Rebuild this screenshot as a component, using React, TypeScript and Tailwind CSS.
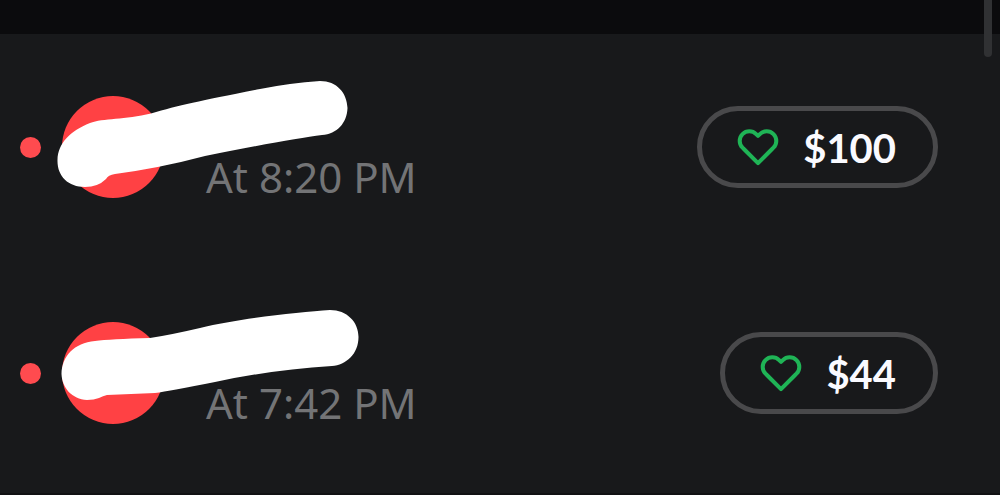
type Activity = {
  time: string;
  amount: string;
  mark: string;
};

const activities: Activity[] = [
  {
    time: "At 8:20 PM",
    amount: "$100",
    mark: "M57.5 126C58 109 70 97 90 89C103 84 125 86 151 79.5C180 71 200 67 260 55Q290 49 320 47C337 47 347 59 347.5 74C347 89 337 100 322 101Q290 105 205 122Q160 134 115 140Q108 141 106 145Q98 153 85 153C68 153 57 142 57.5 126Z",
  },
  {
    time: "At 7:42 PM",
    amount: "$44",
    mark: "M61.5 114C62 96 74 83 95 81Q110 79 150 78Q170 75 200 68C240 58 300 52 330 50C347 50 358.5 62 358.5 77C358.5 94 346 105 332 106Q270 110 215 122Q170 131 155 133L107 135Q103 136 99 138Q94 140 87 140C72 139 62 128 61.5 114Z",
  },
];

function Heart() {
  return (
    <svg className="size-[42px]" viewBox="0 0 24 24" fill="none" aria-hidden="true">
      <path
        d="M20.84 4.61a5.5 5.5 0 0 0-7.78 0L12 5.67l-1.06-1.06a5.5 5.5 0 0 0-7.78 7.78l1.06 1.06L12 21.23l7.78-7.78 1.06-1.06a5.5 5.5 0 0 0 0-7.78z"
        stroke="#1fb456"
        strokeWidth="2.3"
        strokeLinejoin="round"
      />
    </svg>
  );
}

function ActivityRow({ time, amount, mark }: Activity) {
  return (
    <li className="relative flex h-[226px] items-center pl-5 pr-[62px]">
      <span className="size-[21px] shrink-0 rounded-full bg-[#ff4b4f]" />
      <span className="ml-[21px] size-[102px] shrink-0 rounded-full bg-[#ff4144]" />
      <svg
        className="pointer-events-none absolute left-0 top-0 h-[226px] w-[370px]"
        viewBox="0 0 370 226"
        aria-hidden="true"
      >
        <path d={mark} fill="#fff" />
      </svg>
      <p className="ml-[42px] grow pt-[60px] text-[42px] leading-[48px] whitespace-nowrap text-[#737476]">
        {time}
      </p>
      <button
        type="button"
        className="flex h-[82px] shrink-0 cursor-pointer items-center gap-6 rounded-full border-[5px] border-[#49494b] pl-[35px] pr-[37px] font-['Lato',sans-serif] text-[40px] leading-[48px] font-bold text-[#fafaff]"
      >
        <Heart />
        <span className="pt-0.5">{amount}</span>
      </button>
    </li>
  );
}

export default function App() {
  return (
    <div className="relative flex min-h-screen flex-col bg-[#18191b] font-['Noto_Sans',sans-serif]">
      <header className="h-[34px] bg-[#0b0b0d]" />
      <main className="grow">
        <ul>
          {activities.map((activity) => (
            <ActivityRow key={activity.time} {...activity} />
          ))}
        </ul>
      </main>
      <footer className="h-0.5 bg-[#111113]" />
      <div className="absolute right-2 top-0 h-[57px] w-2 rounded-b-full bg-[#303133]" />
    </div>
  );
}
